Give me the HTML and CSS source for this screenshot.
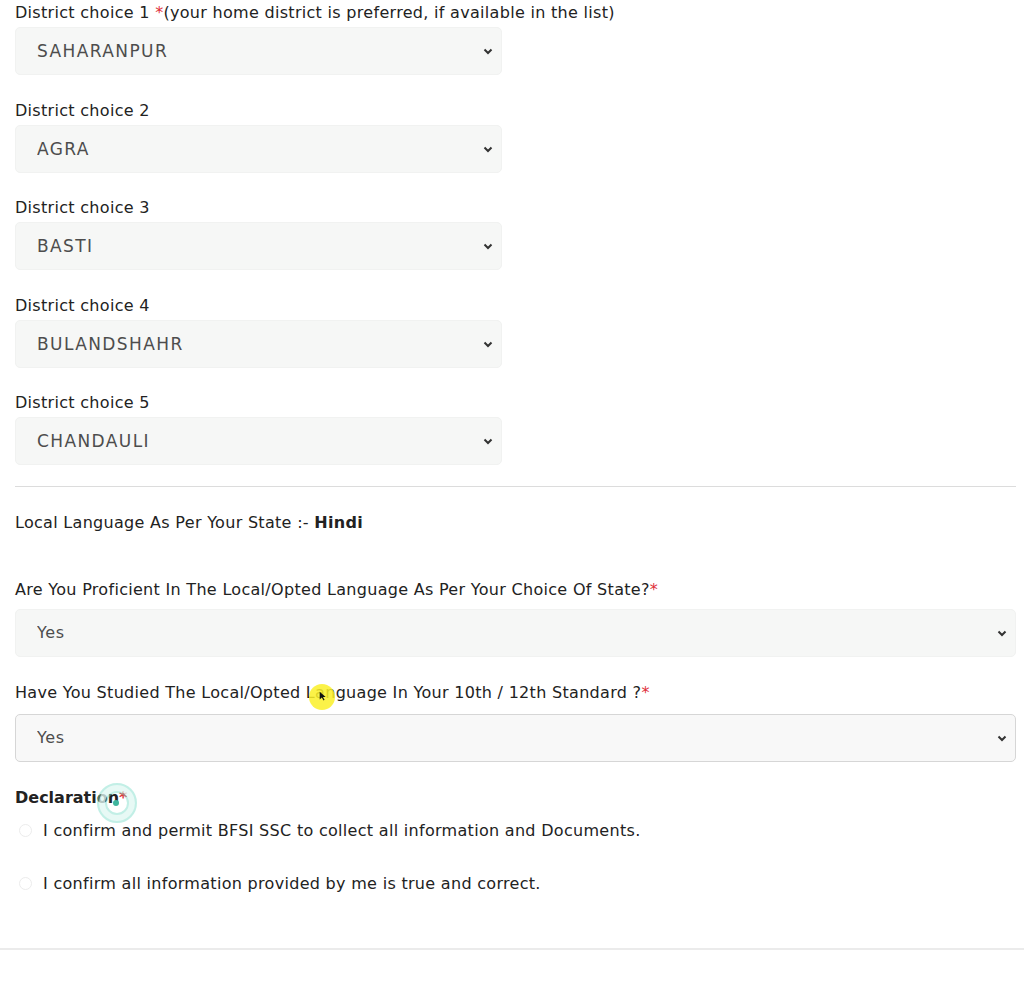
FILE: index.html
```html
<!DOCTYPE html>
<html lang="en">
<head>
    <meta charset="UTF-8">
    <meta name="viewport" content="width=device-width, initial-scale=1.0">
    <title>District Preferences</title>
    <link rel="stylesheet" href="styles.css">
</head>
<body>
    <form class="form">
        <div class="districts">
            <div class="field">
                <label class="label">District choice 1 <span class="req">*</span>(your home district is preferred, if available in the list)</label>
                <div class="select-wrap short">
                    <select class="select"><option>SAHARANPUR</option></select>
                    <svg class="chevron" viewBox="0 0 12 12"><path d="M2.5 4.5 L6 8 L9.5 4.5" /></svg>
                </div>
            </div>
            <div class="field">
                <label class="label">District choice 2</label>
                <div class="select-wrap short">
                    <select class="select"><option>AGRA</option></select>
                    <svg class="chevron" viewBox="0 0 12 12"><path d="M2.5 4.5 L6 8 L9.5 4.5" /></svg>
                </div>
            </div>
            <div class="field">
                <label class="label">District choice 3</label>
                <div class="select-wrap short">
                    <select class="select"><option>BASTI</option></select>
                    <svg class="chevron" viewBox="0 0 12 12"><path d="M2.5 4.5 L6 8 L9.5 4.5" /></svg>
                </div>
            </div>
            <div class="field">
                <label class="label">District choice 4</label>
                <div class="select-wrap short">
                    <select class="select"><option>BULANDSHAHR</option></select>
                    <svg class="chevron" viewBox="0 0 12 12"><path d="M2.5 4.5 L6 8 L9.5 4.5" /></svg>
                </div>
            </div>
            <div class="field">
                <label class="label">District choice 5</label>
                <div class="select-wrap short">
                    <select class="select"><option>CHANDAULI</option></select>
                    <svg class="chevron" viewBox="0 0 12 12"><path d="M2.5 4.5 L6 8 L9.5 4.5" /></svg>
                </div>
            </div>
        </div>

        <hr class="divider">

        <p class="local-lang">Local Language As Per Your State :- <strong>Hindi</strong></p>

        <div class="question">
            <label class="label">Are You Proficient In The Local/Opted Language As Per Your Choice Of State?<span class="req">*</span></label>
            <div class="select-wrap wide">
                <select class="select"><option>Yes</option></select>
                <svg class="chevron" viewBox="0 0 12 12"><path d="M2.5 4.5 L6 8 L9.5 4.5" /></svg>
            </div>
        </div>
        <div class="question">
            <label class="label">Have You Studied The Local/Opted Language In Your 10th / 12th Standard ?<span class="req">*</span></label>
            <div class="select-wrap wide focused">
                <select class="select"><option>Yes</option></select>
                <svg class="chevron" viewBox="0 0 12 12"><path d="M2.5 4.5 L6 8 L9.5 4.5" /></svg>
            </div>
            <span class="cursor-mark">
                <svg class="cursor-arrow" viewBox="0 0 10 14"><path d="M1 1 L1 12 L4 9 L6.5 13.5 L8 12.5 L5.5 8.5 L9.5 8.5 Z" /></svg>
            </span>
        </div>

        <div class="declaration">
            <div class="decl-title">Declaration<span class="req">*</span><span class="click-ring"><span class="click-dot"></span></span></div>
            <label class="radio-row"><input type="radio" name="d1" class="radio"> I confirm and permit BFSI SSC to collect all information and Documents.</label>
            <label class="radio-row"><input type="radio" name="d2" class="radio"> I confirm all information provided by me is true and correct.</label>
        </div>
    </form>
    <hr class="footer-line">
</body>
</html>
```

FILE: styles.css
```css
body {
    margin: 0;
    font-family: 'DejaVu Sans', 'Liberation Sans', sans-serif;
    font-size: 16px;
    letter-spacing: 0.3px;
    color: #222;
    background-color: #fff;
}

.form {
    padding: 2px 8px 0 15px;
}

.districts {
    display: flex;
    flex-direction: column;
    gap: 24.5px;
}

.label {
    display: block;
    line-height: 21px;
    margin-bottom: 4px;
}

.req {
    color: #e0303a;
}

.select-wrap {
    position: relative;
    height: 48px;
}

.select-wrap.short {
    width: 487px;
}

.select {
    appearance: none;
    -webkit-appearance: none;
    width: 100%;
    height: 100%;
    padding: 0 30px 0 21px;
    border: 1px solid #f1f2f1;
    border-radius: 5px;
    background-color: #f6f7f6;
    font-family: inherit;
    font-size: 16px;
    letter-spacing: 0.6px;
    color: #4d4d4d;
}

.short .select {
    font-size: 17px;
    letter-spacing: 1.4px;
}

.focused .select {
    border-color: #d6d6d6;
    background-color: #f8f8f8;
}

.chevron {
    position: absolute;
    right: 8px;
    top: 18px;
    width: 12px;
    height: 12px;
    fill: none;
    stroke: #333;
    stroke-width: 2;
}

.divider {
    border: 0;
    border-top: 1px solid #dcdcdc;
    margin: 21px 0 0;
}

.local-lang {
    margin: 25px 0 46px;
    line-height: 21px;
}

.question {
    position: relative;
    margin-bottom: 25.5px;
}

.question .label {
    margin-bottom: 8.5px;
}

.question + .question .label {
    margin-bottom: 10.5px;
}

.cursor-mark {
    position: absolute;
    left: 294px;
    top: 2px;
    width: 26px;
    height: 26px;
    border-radius: 50%;
    background-color: rgba(250, 240, 40, 0.85);
}

.cursor-arrow {
    position: absolute;
    left: 10px;
    top: 7px;
    width: 7px;
    height: 10px;
    fill: #111;
}

.declaration {
    line-height: 21px;
}

.decl-title {
    position: relative;
    display: inline-block;
    font-weight: bold;
    letter-spacing: 0;
    margin-bottom: 12px;
}

.click-ring {
    position: absolute;
    left: 82px;
    top: -4px;
    width: 40px;
    height: 40px;
    border-radius: 50%;
    border: 2px solid rgba(120, 220, 200, 0.45);
    box-shadow: inset 0 0 0 6px rgba(255, 255, 255, 0.6), inset 0 0 0 8px rgba(120, 220, 200, 0.45);
    box-sizing: border-box;
}

.click-dot {
    position: absolute;
    left: 14px;
    top: 15px;
    width: 6px;
    height: 6px;
    border-radius: 50%;
    background-color: #3fb59d;
}

.radio-row {
    display: flex;
    align-items: center;
    margin-bottom: 32px;
}

.radio {
    appearance: none;
    -webkit-appearance: none;
    width: 13px;
    height: 13px;
    margin: 0 11px 0 4px;
    border: 1px solid #ececec;
    border-radius: 50%;
}

.footer-line {
    border: 0;
    border-top: 2px solid #ebebeb;
    margin: 54px 0 0;
}
```
